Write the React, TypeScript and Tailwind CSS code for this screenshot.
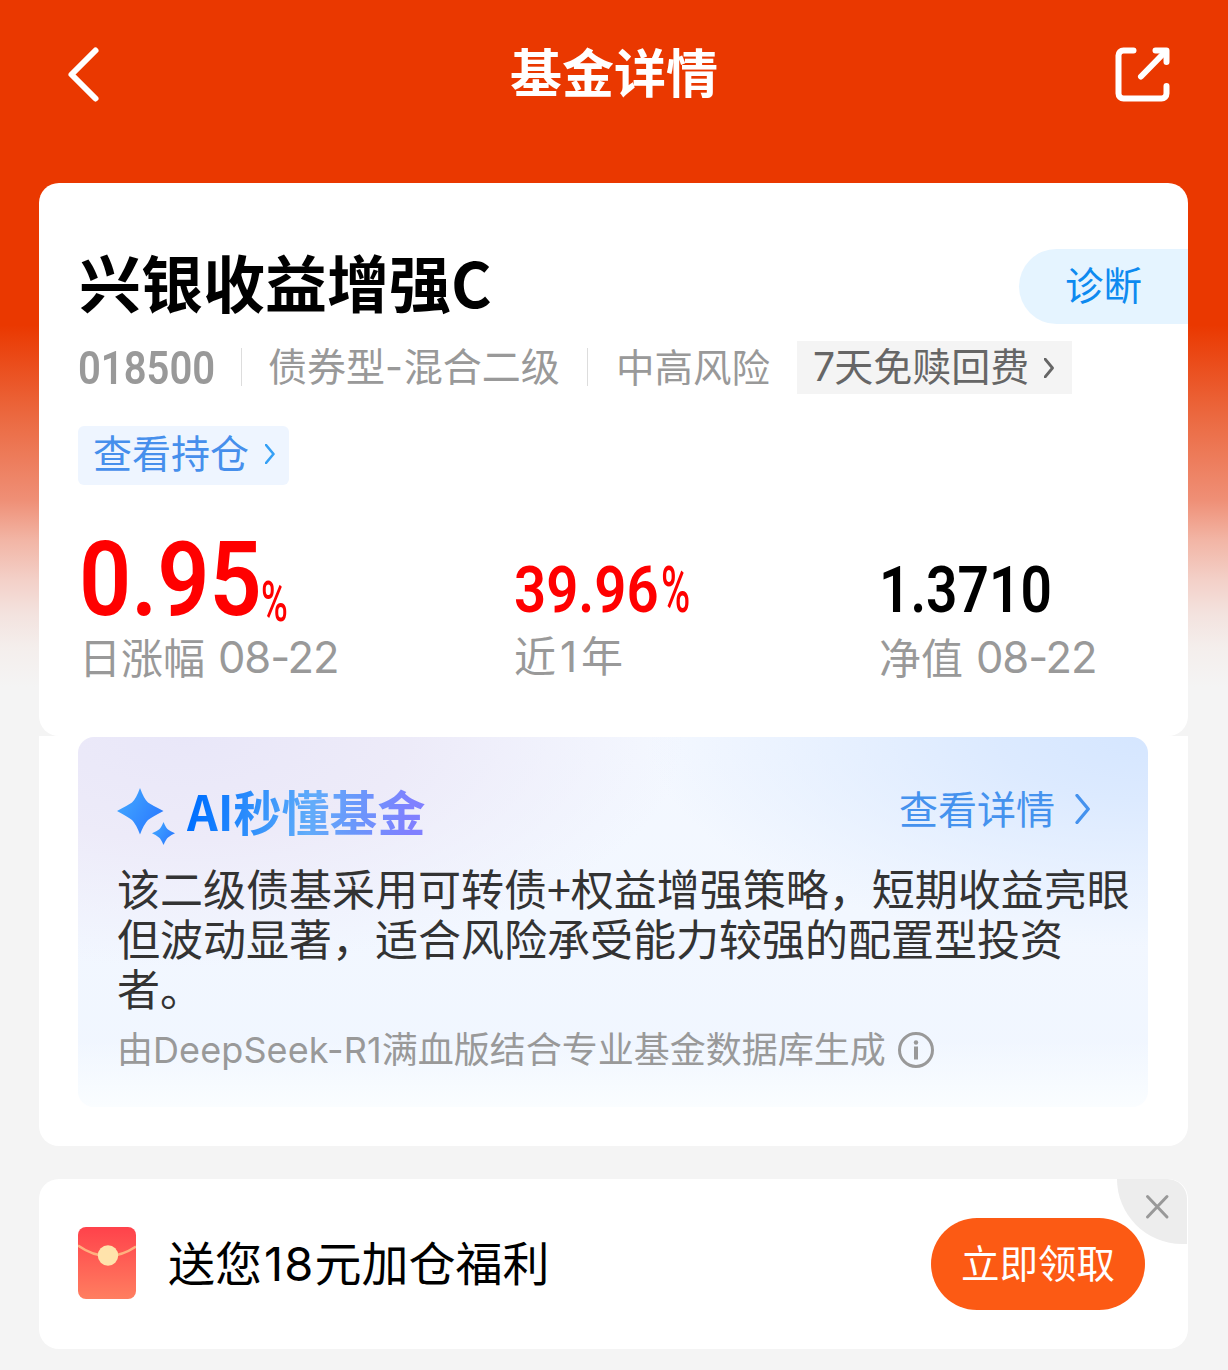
import clsx from "clsx";

type StatProps = {
  label: React.ReactNode;
  date?: string;
  className?: string;
  children: React.ReactNode;
};

// Latin letters and digits inside Chinese text
function Latin({ className, children }: { className?: string; children: React.ReactNode }) {
  return <span className={clsx("font-[Inter,sans-serif]", className)}>{children}</span>;
}

function Chevron({ className, width = 1.6 }: { className?: string; width?: number }) {
  return (
    <svg viewBox="0 0 10 20" fill="none" className={className}>
      <path
        d="M1 1l7.5 9L1 19"
        stroke="currentColor"
        strokeWidth={width}
        strokeLinecap="round"
        strokeLinejoin="round"
      />
    </svg>
  );
}

function Stat({ label, date, className, children }: StatProps) {
  return (
    <div className={className}>
      <div className="flex h-[103px] items-end whitespace-nowrap font-[Roboto,sans-serif] font-semibold">
        {children}
      </div>
      <div className="flex items-center whitespace-nowrap pt-[3px] text-[42px] leading-[54px] text-[#999]">
        {label}
        {date && (
          <Latin className="ml-[13px] pt-[3px] text-[43.5px] tracking-[-1.1px]">{date}</Latin>
        )}
      </div>
    </div>
  );
}

function Header() {
  return (
    <header className="flex h-[183px] items-start justify-between px-[58px] pt-[37px] text-white">
      <svg viewBox="0 0 60 76" fill="none" className="h-[76px] w-[60px]">
        <path
          d="M37.500 13.500L13.500 37.500L37.500 61.500"
          stroke="currentColor"
          strokeWidth="6"
          strokeLinecap="round"
          strokeLinejoin="round"
        />
      </svg>
      <h1 className="-mt-px text-[52px] font-bold leading-[70px]">基金详情</h1>
      <svg viewBox="0 0 60 76" fill="none" className="h-[76px] w-[60px]">
        <g
          stroke="currentColor"
          strokeWidth="6"
          strokeLinecap="round"
          strokeLinejoin="round"
        >
          <path d="M23.500 13.500H13.500a5 5 0 0 0-5 5V56.500a5 5 0 0 0 5 5H51.500a5 5 0 0 0 5-5V49" />
          <path d="M45.500 13.500H56.500V25" />
          <path d="M55 15L31 39.500" />
        </g>
      </svg>
    </header>
  );
}

function Summary() {
  return (
    <section className="h-[553px] rounded-[20px] bg-white pt-[66px]">
      <div className="flex h-[75px] items-center justify-between pl-10">
        <h2 className="-mt-3 text-[62px] font-bold leading-[68px]">兴银收益增强C</h2>
        <button className="h-[75px] w-[169px] rounded-l-full bg-[#e5f4ff] pb-2 text-[38.5px] leading-[62px] text-[#0d8af0]">
          诊断
        </button>
      </div>

      <div className="mt-[17px] flex h-[53px] items-center pl-[39px] text-[39px] leading-[50px] text-[#999]">
        <div className="w-[163px]">
          <span className="inline-block origin-left scale-x-[0.87] pt-px font-[Roboto,sans-serif] text-[46px] font-semibold">
            018500
          </span>
        </div>
        <i className="-mt-0.5 h-[38px] w-px bg-[#ddd]" />
        <span className="-mt-1 w-[345px] whitespace-nowrap pl-[26px]">
          债券型<Latin className="tracking-[0.7px]">-</Latin>混合二级
        </span>
        <i className="-mt-0.5 h-[38px] w-px bg-[#ddd]" />
        <span className="-mt-1.5 w-[209px] pl-7 text-[38.5px]">中高风险</span>
        <button className="flex h-[53px] w-[275px] items-center whitespace-nowrap bg-[#f4f4f4] pl-4 text-[#666]">
          <span className="-mt-1 w-[217px] text-left">
            <Latin className="tracking-[-0.8px]">7</Latin>天免赎回费
          </span>
          <Chevron className="ml-[14px] h-5 w-[10px]" width={2.8} />
        </button>
      </div>

      <button className="ml-[39px] mt-8 flex h-[59px] w-[211px] items-center rounded-md bg-[#eef5ff] pl-[15px] text-[39px] leading-[50px] text-[#468fec]">
        <span className="-mt-[9px]">查看持仓</span>
        <Chevron className="-mt-1 ml-4 h-5 w-[10px] text-[#35a0f5]" width={2.6} />
      </button>

      <div className="mt-[36px] flex pl-10">
        <Stat label="日涨幅" date="08-22" className="w-[436px] text-[#f00]">
          <span className="-mb-[10px] w-[182px] origin-left scale-x-[0.88] text-[104px] leading-[108px]">
            0.95
          </span>
          <span className="-mb-[6px] origin-left scale-x-[0.65] text-[56px] font-medium leading-[56px]">
            %
          </span>
        </Stat>
        <Stat
          label={
            <span>
              近<Latin className="ml-1 mr-1">1</Latin>年
            </span>
          }
          className="-ml-px w-[365px] text-[#f00]"
        >
          <span className="-mb-[2px] w-[147px] origin-left scale-x-[0.88] text-[64px] leading-[70px]">
            39.96
          </span>
          <span className="-mb-[2px] origin-left scale-x-[0.62] text-[64px] font-medium leading-[70px]">
            %
          </span>
        </Stat>
        <Stat label="净值" date="08-22">
          <span className="-mb-[2px] origin-left scale-x-[0.86] text-[64px] leading-[70px]">
            1.3710
          </span>
        </Stat>
      </div>
    </section>
  );
}

function Sparkles() {
  return (
    <svg viewBox="0 0 58 57" className="h-[57px] w-[58px]">
      <defs>
        <linearGradient id="spark" x1="0" y1="0" x2="1" y2="0.6">
          <stop offset="0" stopColor="#45acff" />
          <stop offset="1" stopColor="#2b7bff" />
        </linearGradient>
      </defs>
      <g fill="url(#spark)">
        <path d="M23 0Q27 11 31 14.500Q35 17 46.500 23Q35 29 31 32Q27 36 23 46.500Q19 36 15 32Q11 29 0 23Q11 17 15 14.500Q19 11 23 0Z" />
        <path d="M46.500 34Q49 40 51 41.500Q53 43 58 45.300Q53 47.500 51 49.500Q49 51 46.500 57Q44 51 42 49.500Q40 47.500 35 45.300Q40 43 42 41.500Q44 40 46.500 34Z" />
      </g>
    </svg>
  );
}

function AiSummary() {
  return (
    <section className="h-[410px] rounded-b-[20px] bg-white px-[39px] pt-px">
      <div
        className={clsx(
          "h-[370px] w-[1070px] rounded-[16px] pl-[39px] pt-[51px]",
          "bg-[linear-gradient(to_top,#fafdff_0%,#fafdff00_18%),radial-gradient(ellipse_500px_210px_at_100%_0%,#d5e6ff_0%,#dceaff_30%,#dceaff00_100%),radial-gradient(ellipse_500px_230px_at_10%_0%,#e9e7f9_0%,#edebf9_45%,#f1f6ff00_100%),linear-gradient(#f4f8ff,#f0f6ff)]",
        )}
      >
        <div className="flex h-[57px] items-start">
          <Sparkles />
          <h3 className="-mt-[10px] ml-3 bg-[linear-gradient(100deg,#0070ff_5%,#3895fb_33%,#62acfa_52%,#6a97fb_70%,#8080ff_92%)] bg-clip-text text-[48px] font-bold leading-[64px] text-transparent">
            AI秒懂基金
          </h3>
          <a className="-mt-[6px] ml-auto mr-[57px] flex items-center text-[39px] leading-[50px] text-[#4592ee]">
            查看详情
            <Chevron className="ml-5 mt-[3px] h-[30px] w-[16px]" width={2.2} />
          </a>
        </div>
        <p className="mt-[17px] w-[1020px] text-[43px] leading-[50px] text-[#333]">
          该二级债基采用可转债+权益增强策略，短期收益亮眼
          <br />
          但波动显著，适合风险承受能力较强的配置型投资
          <br />
          者。
        </p>
        <div className="mt-[11px] flex items-center text-[36px] leading-[48px] text-[#999]">
          <span className="w-[767px] whitespace-nowrap">
            由<Latin className="tracking-[0.1px]">DeepSeek-R1</Latin>
            满血版结合专业基金数据库生成
          </span>
          <svg viewBox="0 0 36 36" fill="none" className="ml-[14px] mt-[3px] size-9">
            <circle cx="18" cy="18" r="16.500" stroke="#999" strokeWidth="3" />
            <circle cx="18" cy="10.500" r="2.200" fill="#999" />
            <path d="M18 14.500V27.500" stroke="#999" strokeWidth="4" />
          </svg>
        </div>
      </div>
    </section>
  );
}

function RedPacket() {
  return (
    <svg viewBox="0 0 58 72" fill="none" className="-mt-0.5 h-[72px] w-[58px]">
      <defs>
        <linearGradient id="packet" x1="0" y1="0" x2="0" y2="1">
          <stop offset="0" stopColor="#ff424b" />
          <stop offset="1" stopColor="#ff7e60" />
        </linearGradient>
      </defs>
      <rect width="58" height="72" rx="8" fill="url(#packet)" />
      <path d="M0 18.500Q29 39 58 19.500" stroke="#ffb07f" strokeWidth="2.400" />
      <circle cx="30" cy="28.500" r="10.200" fill="#ffe3ab" />
    </svg>
  );
}

function GiftBanner() {
  return (
    <section className="relative mt-[33px] flex h-[170px] items-center overflow-hidden rounded-[20px] bg-white pl-[39px] pr-[43px]">
      <RedPacket />
      <span className="-mt-[3px] ml-8 text-[47px] leading-[60px]">
        送您<Latin className="ml-0.5 tracking-[1.2px]">18</Latin>元加仓福利
      </span>
      <button className="ml-auto h-[92px] w-[214px] rounded-full bg-[#fc5a14] pb-[5px] text-[38.5px] text-white">
        立即领取
      </button>
      <button className="absolute right-px top-0 h-[65px] w-[70px] rounded-bl-[66px] rounded-tr-[20px] bg-[#ededed]">
        <svg viewBox="0 0 70 65" fill="none" className="h-[65px] w-[70px]">
          <path
            d="M30.500 17.500L50 38M50 17.500L30.500 38"
            stroke="#999"
            strokeWidth="3"
            strokeLinecap="round"
          />
        </svg>
      </button>
    </section>
  );
}

export default function App() {
  return (
    <div className="h-[1370px] w-[1228px] overflow-hidden bg-[#f4f4f4] bg-[linear-gradient(#ea3800_0px,#ea3800_325px,#eb683f_415px,#ef8f76_500px,#f2b5a5_540px,#f3d0c8_580px,#f3e2de_613px,#f4eeec_647px,#f4f4f4_687px)] font-['Noto_Sans_CJK_SC',sans-serif] text-black">
      <Header />
      <main className="ml-[39px] w-[1149px]">
        <Summary />
        <AiSummary />
        <GiftBanner />
      </main>
    </div>
  );
}
